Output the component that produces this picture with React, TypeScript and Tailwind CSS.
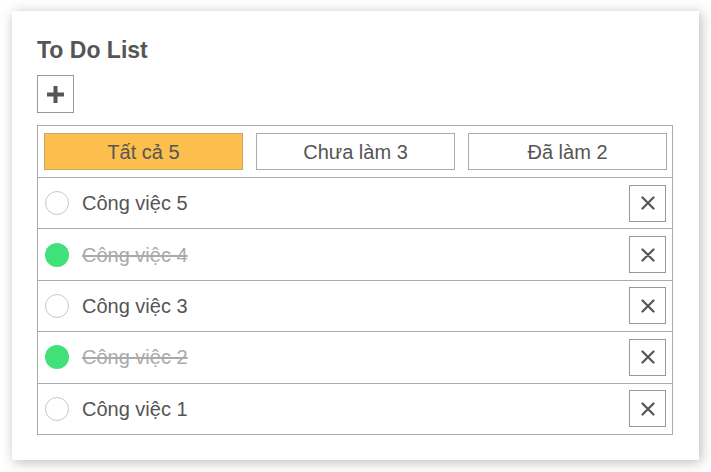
import { useState } from 'react';

type Todo = { id: number; title: string; done: boolean };

const initial: Todo[] = [
  { id: 5, title: 'Công việc 5', done: false },
  { id: 4, title: 'Công việc 4', done: true },
  { id: 3, title: 'Công việc 3', done: false },
  { id: 2, title: 'Công việc 2', done: true },
  { id: 1, title: 'Công việc 1', done: false },
];

function PlusIcon() {
  return (
    <svg width="19" height="19" viewBox="0 0 19 19">
      <path d="M9.5 1v17M1 9.5h17" stroke="#555" strokeWidth="4" />
    </svg>
  );
}

function XIcon() {
  return (
    <svg width="14" height="14" viewBox="0 0 14 14">
      <path d="M1.5 1.5l11 11M12.5 1.5l-11 11" stroke="#555" strokeWidth="2.2" strokeLinecap="round" />
    </svg>
  );
}

export default function App() {
  const [todos, setTodos] = useState<Todo[]>(initial);
  const [filter, setFilter] = useState<'all' | 'todo' | 'done'>('all');

  const todoCount = todos.filter((t) => !t.done).length;
  const doneCount = todos.filter((t) => t.done).length;
  const shown = todos.filter((t) => (filter === 'all' ? true : filter === 'done' ? t.done : !t.done));

  const tabs = [
    { key: 'all' as const, label: `Tất cả ${todos.length}` },
    { key: 'todo' as const, label: `Chưa làm ${todoCount}` },
    { key: 'done' as const, label: `Đã làm ${doneCount}` },
  ];

  return (
    <div className="w-[711px] h-[472px] bg-white pt-[11px] pl-[12px] font-['Liberation_Sans',Arial,sans-serif] text-[#555]">
      <div className="w-[687px] h-[449px] bg-white shadow-[2px_2px_12px_rgba(0,0,0,0.28)] pl-[25px] pr-[26px] pt-[26px]">
        <h1 className="text-[23px] leading-[26px] font-bold">To Do List</h1>
        <button className="mt-[12px] w-[37px] h-[38px] border border-[#999] flex items-center justify-center">
          <PlusIcon />
        </button>

        <div className="mt-[12px] border border-[#aaa]">
          <div className="grid grid-cols-3 gap-[13px] pl-[6px] pr-[5px] py-[7px]">
            {tabs.map((t) => (
              <button
                key={t.key}
                onClick={() => setFilter(t.key)}
                className={`h-[37px] border text-[20px] ${
                  filter === t.key ? 'bg-[#fcbf4e] border-[#c9a56a]' : 'bg-white border-[#aaa]'
                }`}
              >
                {t.label}
              </button>
            ))}
          </div>

          {shown.map((t) => (
            <div key={t.id} className="h-[51.4px] border-t border-[#aaa] flex items-center pl-[7px] pr-[6px]">
              <button
                onClick={() => setTodos(todos.map((x) => (x.id === t.id ? { ...x, done: !x.done } : x)))}
                className={`w-[24px] h-[24px] rounded-full ${t.done ? 'bg-[#3fe178]' : 'border border-[#c8c8c8] bg-white'}`}
              />
              <span className={`ml-[13px] text-[20px] ${t.done ? 'line-through text-[#aaa]' : ''}`}>{t.title}</span>
              <button
                onClick={() => setTodos(todos.filter((x) => x.id !== t.id))}
                className="ml-auto w-[37px] h-[37px] border border-[#999] flex items-center justify-center"
              >
                <XIcon />
              </button>
            </div>
          ))}
        </div>
      </div>
    </div>
  );
}
